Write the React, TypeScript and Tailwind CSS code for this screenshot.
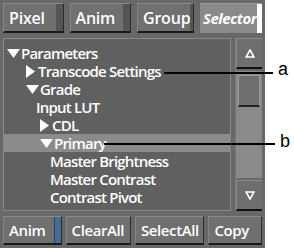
import React from "react";

const font = { fontFamily: '"Open Sans", "DejaVu Sans", sans-serif' };

const Tri = ({ open }: { open: boolean }) =>
  open ? (
    <svg width="13" height="9" viewBox="0 0 13 9" className="mr-[1px]">
      <polygon points="0,0 13,0 6.5,9" fill="#fff" />
    </svg>
  ) : (
    <svg width="9" height="13" viewBox="0 0 9 13" className="mr-[3px]">
      <polygon points="0,0 9,6.5 0,13" fill="#fff" />
    </svg>
  );

interface IRow {
  label: string;
  indent: number;
  open?: boolean;
  active?: boolean;
}

const rows: IRow[] = [
  { label: "Parameters", indent: 3, open: true },
  { label: "Transcode Settings", indent: 22, open: false },
  { label: "Grade", indent: 22, open: true },
  { label: "Input LUT", indent: 32 },
  { label: "CDL", indent: 36, open: false },
  { label: "Primary", indent: 36, open: true, active: true },
  { label: "Master Brightness", indent: 46 },
  { label: "Master Contrast", indent: 46 },
  { label: "Contrast Pivot", indent: 46 },
];

const Btn = ({
  children,
  w,
  tab,
  big,
}: {
  children: React.ReactNode;
  w: string;
  tab?: "dark" | "blue";
  big?: boolean;
}) => (
  <div
    className={`${w} h-full flex border-t border-l border-t-[#8a8a8a] border-l-[#858585] border-b-2 border-b-[#1a1a1a] border-r border-r-[#2a2a2a] bg-[#707070]`}
  >
    <div
      className={`flex-1 flex items-center pl-[5px] text-white font-semibold ${
        big ? "text-[16px] tracking-[-0.2px]" : "text-[15px] tracking-[-0.4px]"
      }`}
    >
      {children}
    </div>
    {tab === "dark" && <div className="w-[7px] bg-[#555555]" />}
    {tab === "blue" && (
      <div className="w-[7px] bg-[#4a6a9a] border-l border-[#2c3f5e]" />
    )}
  </div>
);

export default function App() {
  return (
    <div className="relative w-[294px] h-[248px] bg-white flex" style={font}>
      <div className="w-[265px] h-full bg-[#686868] flex flex-col p-[3px]">
        <div className="h-[30px] flex gap-[6px]">
          <Btn w="w-[61px]" tab="dark" big>Pixel</Btn>
          <Btn w="w-[62px]" tab="dark" big>Anim</Btn>
          <Btn w="w-[57px]" tab="dark" big>Group</Btn>
          <div className="w-[62px] h-full flex border-t border-[#9a9a9a] bg-[#8a8a8a]">
            <div className="flex-1 flex items-center pl-[3px] text-white text-[15px] font-bold italic tracking-[-0.5px]">
              Selector
            </div>
            <div className="w-[7px] bg-white" />
          </div>
        </div>

        <div className="flex-1 flex gap-[4px] mt-[5px] mb-[5px]">
          <div className="flex-1 border border-[#8a8a8a] bg-[#606060] pt-[5px] overflow-hidden">
            {rows.map((r) => (
              <div
                key={r.label}
                className={`h-[18px] flex items-center text-white text-[15px] font-semibold leading-[18px] tracking-[-0.8px] ${
                  r.active ? "bg-[#8b8b8b]" : ""
                }`}
                style={{ paddingLeft: r.indent }}
              >
                {r.open !== undefined && <Tri open={r.open} />}
                <span>{r.label}</span>
              </div>
            ))}
          </div>
          <div className="w-[27px] flex flex-col border-l border-[#777]">
            <div className="h-[31px] flex items-center justify-center bg-[#6e6e6e] border-t border-l border-[#8a8a8a] border-b-2 border-b-[#111]">
              <svg width="10" height="9" viewBox="0 0 10 9">
                <polygon points="5,1 9,8 1,8" fill="none" stroke="#fff" strokeWidth="1.6" />
              </svg>
            </div>
            <div className="flex-1 bg-[#8a8a8a] px-[2px] pt-[4px] my-[2px]">
              <div className="h-[32px] bg-[#6e6e6e] border border-[#9a9a9a] border-b-2 border-b-[#222]" />
            </div>
            <div className="h-[31px] flex items-center justify-center bg-[#6e6e6e] border-t border-l border-[#8a8a8a] border-b-2 border-b-[#111]">
              <svg width="10" height="9" viewBox="0 0 10 9">
                <polygon points="1,1 9,1 5,8" fill="none" stroke="#fff" strokeWidth="1.6" />
              </svg>
            </div>
          </div>
        </div>

        <div className="h-[29px] flex gap-[4px]">
          <Btn w="w-[59px]" tab="blue">Anim</Btn>
          <Btn w="w-[66px]">ClearAll</Btn>
          <Btn w="w-[70px]">SelectAll</Btn>
          <Btn w="w-[54px]">Copy</Btn>
        </div>
      </div>

      <div className="absolute left-[164px] top-[72px] w-[109px] h-[2px] bg-black" />
      <div className="absolute left-[278px] top-[60px] text-[18px] text-black leading-none" style={{ fontFamily: '"Liberation Sans", sans-serif' }}>
        a
      </div>
      <div className="absolute left-[104px] top-[143px] w-[171px] h-[2px] bg-black" />
      <div className="absolute left-[280px] top-[132px] text-[18px] text-black leading-none" style={{ fontFamily: '"Liberation Sans", sans-serif' }}>
        b
      </div>
    </div>
  );
}
